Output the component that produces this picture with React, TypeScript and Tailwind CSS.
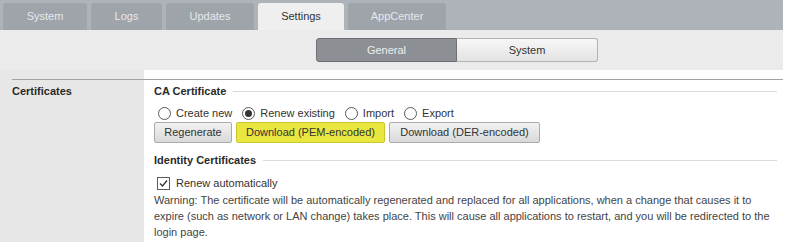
import React, { useState } from 'react';

const tabs = [
  { label: 'System', w: 'w-[84px]' },
  { label: 'Logs', w: 'w-[71px]' },
  { label: 'Updates', w: 'w-[88px]' },
  { label: 'Settings', w: 'w-[86px]' },
  { label: 'AppCenter', w: 'w-[98px]' },
];

const Radio: React.FC<{ checked?: boolean; label: string; first?: boolean; onClick: () => void }> = ({ checked, label, first, onClick }) => (
  <label onClick={onClick} className={`flex items-center gap-[5px] cursor-pointer ${first ? 'ml-[4px]' : 'ml-[10px]'}`}>
    <span className="w-[13px] h-[13px] rounded-full border border-[#5a5a5a] bg-white flex items-center justify-center">
      {checked && <span className="w-[7px] h-[7px] rounded-full bg-[#333]"></span>}
    </span>
    <span>{label}</span>
  </label>
);

const Legend: React.FC<{ title: string; className?: string }> = ({ title, className }) => (
  <div className={`flex items-center h-[14px] ${className || ''}`}>
    <span className="font-bold text-[#2a2a2a]">{title}</span>
    <span className="flex-1 h-px bg-[#dadada] ml-[7px]"></span>
  </div>
);

export default function App() {
  const [mode, setMode] = useState('renew');
  const [auto, setAuto] = useState(true);
  const [sub, setSub] = useState('general');

  return (
    <div className="w-[783px] font-['Liberation_Sans',Arial,sans-serif] text-[11px] text-[#444] bg-white">
      <div className="h-[30px] bg-[#adb3b9] flex items-end gap-[4px] pl-[3px]">
        {tabs.map(t => {
          const active = t.label === 'Settings';
          return (
            <div
              key={t.label}
              className={`${t.w} h-[27px] rounded-t-[3px] flex items-center justify-center ${active ? 'bg-[#efefef] text-[#333]' : 'bg-[#9ea4aa] text-[#e6e8ea]'}`}
            >
              {t.label}
            </div>
          );
        })}
      </div>

      <div className="h-[40px] bg-[#ebebeb] flex items-center pl-[316px]">
        <div className="flex h-[24px]">
          <button
            onClick={() => setSub('general')}
            className={`w-[141px] rounded-l-[3px] border ${sub === 'general' ? 'bg-[#8c9095] border-[#6d7175] text-[#eceeef]' : 'bg-gradient-to-b from-[#f7f7f7] to-[#e3e3e3] border-[#b3b3b3] text-[#333]'}`}
          >
            General
          </button>
          <button
            onClick={() => setSub('system')}
            className={`w-[141px] rounded-r-[3px] border border-l-0 ${sub === 'system' ? 'bg-[#8c9095] border-[#6d7175] text-[#eceeef]' : 'bg-gradient-to-b from-[#f7f7f7] to-[#e3e3e3] border-[#b3b3b3] text-[#333]'}`}
          >
            System
          </button>
        </div>
      </div>

      <div className="flex">
        <div className="w-[144px] bg-[#e7e7e7]">
          <div className="h-[9px]"></div>
          <div className="h-px bg-[#a2a2a2] ml-[12px]"></div>
          <div className="pl-[12px] pt-[5px] font-bold text-[#2a2a2a] leading-[13px] h-[162px]">Certificates</div>
        </div>
        <div className="flex-1">
          <div className="h-[9px]"></div>
          <div className="h-px bg-[#a2a2a2]"></div>
          <div className="pl-[10px] pr-[6px]">
            <Legend title="CA Certificate" className="mt-[4px]" />
            <div className="flex items-center h-[18px] mt-[6px] text-[#333]">
              <Radio first label="Create new" checked={mode === 'create'} onClick={() => setMode('create')} />
              <Radio label="Renew existing" checked={mode === 'renew'} onClick={() => setMode('renew')} />
              <Radio label="Import" checked={mode === 'import'} onClick={() => setMode('import')} />
              <Radio label="Export" checked={mode === 'export'} onClick={() => setMode('export')} />
            </div>
            <div className="flex gap-[4px] h-[21px] text-[#333]">
              <button className="w-[78px] border border-[#aaa] rounded-[2px] bg-gradient-to-b from-[#f2f2f2] to-[#d9d9d9]">Regenerate</button>
              <button className="w-[149px] border border-[#c9c72c] rounded-[2px] bg-[#e9e73f]">Download (PEM-encoded)</button>
              <button className="w-[151px] border border-[#aaa] rounded-[2px] bg-gradient-to-b from-[#f2f2f2] to-[#d9d9d9]">Download (DER-encoded)</button>
            </div>
            <Legend title="Identity Certificates" className="mt-[10px]" />
            <label className="flex items-center h-[18px] mt-[7px] gap-[6px] text-[#333] cursor-pointer" onClick={() => setAuto(!auto)}>
              <span className="ml-[3px] w-[13px] h-[13px] border border-[#5a5a5a] bg-white flex items-center justify-center">
                {auto && (
                  <svg width="11" height="11" viewBox="0 0 11 11" fill="none">
                    <path d="M2 5.5 L4.5 8 L9 2.5" stroke="#333" strokeWidth="1.3" />
                  </svg>
                )}
              </span>
              <span>Renew automatically</span>
            </label>
            <p className="leading-[16px]">
              Warning: The certificate will be automatically regenerated and replaced for all applications, when a change that causes it to expire (such as network or LAN change) takes place. This will cause all applications to restart, and you will be redirected to the login page.
            </p>
          </div>
        </div>
      </div>
    </div>
  );
}
